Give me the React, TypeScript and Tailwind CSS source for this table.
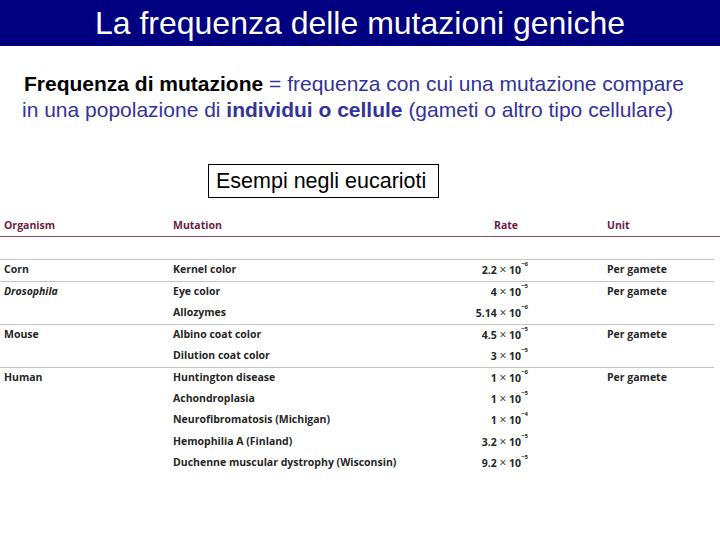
import React from 'react';

interface Row {
  organism: string;
  italic?: boolean;
  mutation: string;
  base: string;
  exp: string;
  unit: string;
  groupStart?: boolean;
}

const rows: Row[] = [
  { organism: 'Corn', mutation: 'Kernel color', base: '2.2', exp: '−6', unit: 'Per gamete', groupStart: true },
  { organism: 'Drosophila', italic: true, mutation: 'Eye color', base: '4', exp: '−5', unit: 'Per gamete', groupStart: true },
  { organism: '', mutation: 'Allozymes', base: '5.14', exp: '−6', unit: '' },
  { organism: 'Mouse', mutation: 'Albino coat color', base: '4.5', exp: '−5', unit: 'Per gamete', groupStart: true },
  { organism: '', mutation: 'Dilution coat color', base: '3', exp: '−5', unit: '' },
  { organism: 'Human', mutation: 'Huntington disease', base: '1', exp: '−6', unit: 'Per gamete', groupStart: true },
  { organism: '', mutation: 'Achondroplasia', base: '1', exp: '−5', unit: '' },
  { organism: '', mutation: 'Neurofibromatosis (Michigan)', base: '1', exp: '−4', unit: '' },
  { organism: '', mutation: 'Hemophilia A (Finland)', base: '3.2', exp: '−5', unit: '' },
  { organism: '', mutation: 'Duchenne muscular dystrophy (Wisconsin)', base: '9.2', exp: '−5', unit: '' },
];

export default function App() {
  return (
    <div className="w-[720px] h-[540px] bg-white overflow-hidden relative">
      {/* Titolo */}
      <div className="h-[46px] bg-[#000080] flex items-center justify-center">
        <h1 className="text-white text-[32px] leading-none font-['Liberation_Sans',Arial,sans-serif]">
          La frequenza delle mutazioni geniche
        </h1>
      </div>

      {/* Definizione */}
      <div className="pt-[25px] pl-[22px] text-[21px] leading-[25.5px] text-[#333399] font-['Liberation_Sans',Arial,sans-serif]">
        <p className="pl-[2px]">
          <span className="font-bold text-black">Frequenza di mutazione</span> = frequenza con cui una mutazione compare
        </p>
        <p>
          in una popolazione di <span className="font-bold">individui o cellule</span> (gameti o altro tipo cellulare)
        </p>
      </div>

      {/* Riquadro */}
      <div className="mt-[42px] ml-[208px] w-[231px] h-[34px] border border-black flex items-center pl-[7px] text-[21.5px] text-black font-['Liberation_Sans',Arial,sans-serif]">
        Esempi negli eucarioti
      </div>

      {/* Tabella */}
      <div className="mt-[18px] font-['Open_Sans',sans-serif] font-bold text-[10.5px] text-[#262626]">
        <div className="h-[21px] flex items-center border-b border-[#8a4a68] text-[#6b1d45]">
          <div className="w-[169px] pl-[4px]">Organism</div>
          <div className="w-[325px] pl-[4px]">Mutation</div>
          <div className="w-[36px]">Rate</div>
          <div className="pl-[77px]">Unit</div>
        </div>
        <div className="h-[22px]" />
        <div className="mr-[6px]">
          {rows.map((r, i) => (
            <div
              key={i}
              className={`h-[21.5px] flex items-center ${r.groupStart ? 'border-t border-[#c4c4c4]' : ''}`}
            >
              <div className={`w-[169px] pl-[4px] ${r.italic ? 'italic' : ''}`}>{r.organism}</div>
              <div className="w-[277px] pl-[4px] whitespace-nowrap">{r.mutation}</div>
              <div className="w-[82px] text-right">
                {r.base} <span className="text-[12px] font-normal">×</span> 10<sup className="text-[6px] align-[5px]">{r.exp}</sup>
              </div>
              <div className="pl-[79px]">{r.unit}</div>
            </div>
          ))}
        </div>
      </div>
    </div>
  );
}
